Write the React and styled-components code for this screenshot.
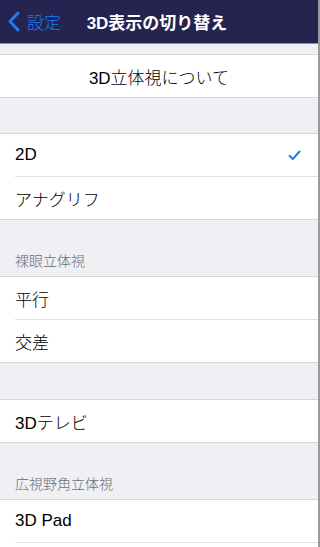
import React from "react";
import styled, { createGlobalStyle } from "styled-components";

const GlobalStyle = createGlobalStyle`
  html, body {
    margin: 0;
    padding: 0;
    background: #efeff4;
    font-family: "Liberation Sans", "Noto Sans CJK JP", sans-serif;
  }
`;

const Screen = styled.div`
  width: 320px;
  height: 547px;
  overflow: hidden;
  background: #efeff4;
  border-right: 2px solid #9a9aa0;
  box-sizing: border-box;
`;

const NavBar = styled.div`
  height: 43px;
  background: #25234f;
  border-bottom: 1px solid #8c8ba6;
  display: flex;
  align-items: center;
  position: relative;
`;

const BackButton = styled.div`
  display: flex;
  align-items: center;
  gap: 7px;
  padding-left: 8px;
  color: #1b7ef6;
  font-size: 17px;
  font-weight: 300;
`;

const Title = styled.div`
  position: absolute;
  left: 0;
  right: 4px;
  text-align: center;
  color: #fff;
  font-size: 17px;
  font-weight: bold;
  pointer-events: none;
`;

const Gap = styled.div`
  height: ${({ h }) => h}px;
  display: flex;
  align-items: flex-end;
  box-sizing: border-box;
  padding: 0 15px 6px;
  color: #6d6d72;
  font-size: 14px;
  font-weight: 300;
`;

const Group = styled.div`
  background: #fff;
  border-top: 1px solid #d5d5da;
  border-bottom: 1px solid #d5d5da;
`;

const RowSep = styled.div`
  height: 1px;
  background: #e0e0e4;
  margin-left: 15px;
`;

const Cell = styled.div`
  height: 42px;
  display: flex;
  align-items: center;
  justify-content: ${({ center }) => (center ? "center" : "space-between")};
  padding: ${({ center }) => (center ? "0" : "0 17px 0 15px")};
  font-size: 17px;
  font-weight: 300;
  color: #000;
`;

const Check = () => (
  <svg width="13" height="11" viewBox="0 0 13 11">
    <path d="M1.5 5.8 L4.8 9 L11.5 1.5" fill="none" stroke="#157efb" strokeWidth="2" strokeLinecap="round" strokeLinejoin="round" />
  </svg>
);

const Chevron = () => (
  <svg width="12" height="21" viewBox="0 0 12 21">
    <path d="M10 2 L2 10.5 L10 19" fill="none" stroke="#1b7ef6" strokeWidth="3" strokeLinecap="round" strokeLinejoin="round" />
  </svg>
);

const List = ({ items }) => (
  <Group>
    {items.map((it, i) => (
      <React.Fragment key={i}>
        {i > 0 && <RowSep />}
        <Cell center={it.center}>
          <span>{it.label}</span>
          {it.checked && <Check />}
        </Cell>
      </React.Fragment>
    ))}
  </Group>
);

export default function App() {
  return (
    <Screen>
      <GlobalStyle />
      <NavBar>
        <BackButton>
          <Chevron />
          <span>設定</span>
        </BackButton>
        <Title>3D表示の切り替え</Title>
      </NavBar>
      <Gap h={10} />
      <List items={[{ label: "3D立体視について", center: true }]} />
      <Gap h={35} />
      <List items={[{ label: "2D", checked: true }, { label: "アナグリフ" }]} />
      <Gap h={56}>裸眼立体視</Gap>
      <List items={[{ label: "平行" }, { label: "交差" }]} />
      <Gap h={36} />
      <List items={[{ label: "3Dテレビ" }]} />
      <Gap h={56}>広視野角立体視</Gap>
      <List items={[{ label: "3D Pad" }, { label: "" }]} />
    </Screen>
  );
}
